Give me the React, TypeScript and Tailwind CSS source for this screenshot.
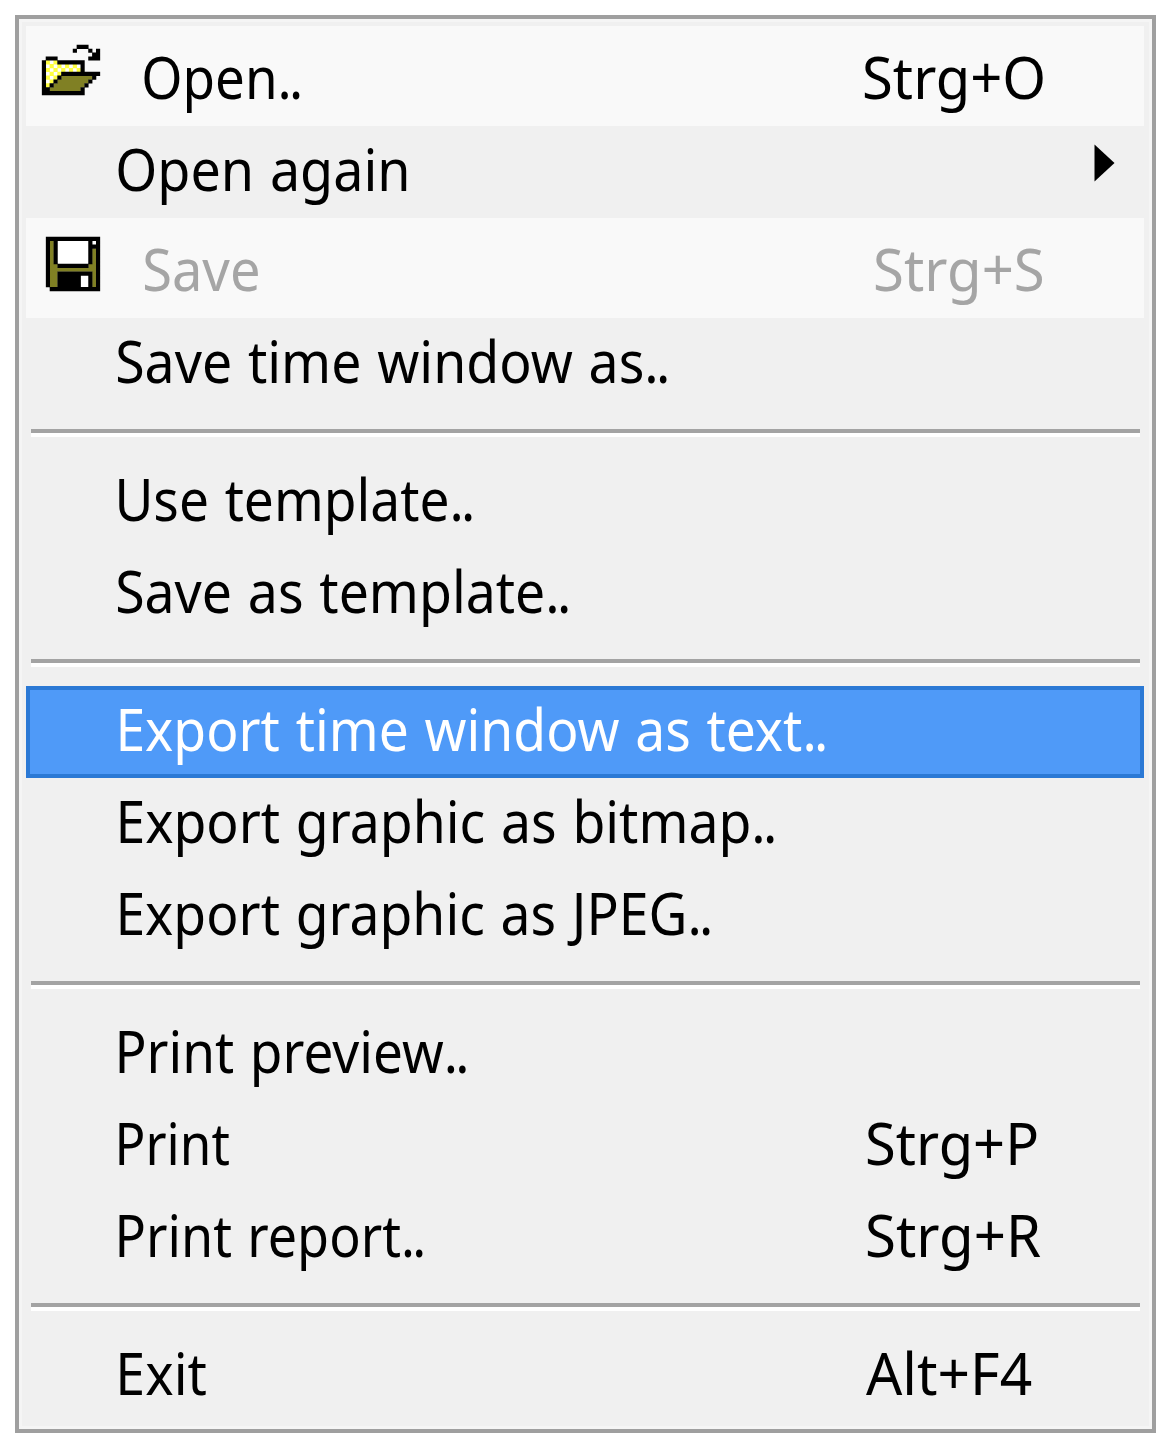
import { useLayoutEffect, useRef } from "react";

type Ink = { text: string; left: number; width: number };
type Row = {
  label: Ink;
  shortcut?: Ink;
  icon?: "open" | "save";
  disabled?: boolean;
  selected?: boolean;
  submenu?: boolean;
};

const groups: Row[][] = [
  [
    { label: { text: "Open..", left: 144, width: 156 }, shortcut: { text: "Strg+O", left: 864, width: 179 }, icon: "open" },
    { label: { text: "Open again", left: 118, width: 289 }, submenu: true },
    { label: { text: "Save", left: 144, width: 114 }, shortcut: { text: "Strg+S", left: 875, width: 168 }, icon: "save", disabled: true },
    { label: { text: "Save time window as..", left: 117, width: 550 } },
  ],
  [
    { label: { text: "Use template..", left: 119, width: 353 } },
    { label: { text: "Save as template..", left: 117, width: 451 } },
  ],
  [
    { label: { text: "Export time window as text..", left: 120, width: 705 }, selected: true },
    { label: { text: "Export graphic as bitmap..", left: 120, width: 654 } },
    { label: { text: "Export graphic as JPEG..", left: 120, width: 590 } },
  ],
  [
    { label: { text: "Print preview..", left: 119, width: 345 } },
    { label: { text: "Print", left: 119, width: 110 }, shortcut: { text: "Strg+P", left: 867, width: 170 } },
    { label: { text: "Print report..", left: 119, width: 304 }, shortcut: { text: "Strg+R", left: 867, width: 174 } },
  ],
  [{ label: { text: "Exit", left: 120, width: 86 }, shortcut: { text: "Alt+F4", left: 866, width: 166 } }],
];

// Condenses a label so that its visible ink spans exactly the given width.
// Trailing dots are set tighter than the words, and word gaps a little wider.
function FitText({ text, width }: { text: string; width: number }) {
  const ref = useRef<HTMLSpanElement>(null);
  const dotted = text.endsWith("..");
  const body = dotted ? text.slice(0, -2) : text;
  useLayoutEffect(() => {
    const el = ref.current;
    const ctx = document.createElement("canvas").getContext("2d");
    if (!el || !ctx) return;
    ctx.font = '400 58px "Noto Sans"';
    const m = ctx.measureText(text);
    const gaps = text.split(" ").length - 1;
    const ink = m.actualBoundingBoxLeft + m.actualBoundingBoxRight + gaps * 2 - (dotted ? 3 : 0);
    const scale = width / ink;
    el.style.transform = `translateX(${m.actualBoundingBoxLeft * scale}px) scaleX(${scale})`;
  }, [text, width, dotted]);
  return (
    <span ref={ref} className="inline-block origin-left whitespace-pre [word-spacing:2px]">
      {body}
      {dotted && <span className="tracking-[-3px]">..</span>}
    </span>
  );
}

const folder = [
  ".........###...",
  "........#...#.#",
  ".............##",
  ".###........###",
  "#ywy#######....",
  "#wywywywyw#....",
  "#ywywywywy#....",
  "#wywy##########",
  "#ywy#oooooooo#.",
  "#wy#oooooooo#..",
  "#y#oooooooo#...",
  "##oooooooo#....",
  "###########....",
];

const floppy = [
  "##############",
  "#o#wwwwwwww#w#",
  "#o#wwwwwwww###",
  "#o#wwwwwwww#o#",
  "#o#wwwwwwww#o#",
  "#o#wwwwwwww#o#",
  "#o#wwwwwwww#o#",
  "#oo########oo#",
  "#oooooooooooo#",
  "#oo#########o#",
  "#oo######ww#o#",
  "#oo######ww#o#",
  "#oo######ww#o#",
  ".#############",
];

const inks: Record<string, string> = { w: "#ffffff", y: "#ffff40", o: "#808024", "#": "#000000" };

// One path per colour, so that neighbouring cells join without seams.
function PixelIcon({ rows, className }: { rows: string[]; className: string }) {
  const cells = (ink: string) =>
    rows.flatMap((r, y) => [...r].map((c, x) => (c === ink ? `M${x - 0.04} ${y - 0.04}h1.08v1.08h-1.08z` : ""))).join("");
  return (
    <svg className={className} viewBox={`0 0 ${rows[0].length} ${rows.length}`} preserveAspectRatio="none">
      {Object.keys(inks).map((ink) => (
        <path key={ink} d={cells(ink)} fill={inks[ink]} />
      ))}
    </svg>
  );
}

function MenuRow({ row }: { row: Row }) {
  const tone = row.selected
    ? "h-[92px] bg-[#4f9af8] text-white shadow-[inset_0_0_0_4px_#2b79d5]"
    : row.icon
      ? "h-[100px] bg-[#f9f9f9] pt-2"
      : "h-[92px]";
  return (
    <div className={`flex w-[1118px] items-start ${tone} ${row.disabled ? "text-[#a5a5a5]" : ""}`}>
      <div className="h-full shrink-0" style={{ width: row.label.left - 26 }}>
        {row.icon === "open" && <PixelIcon rows={folder} className="mt-[11px] ml-[15.5px] h-[50px] w-[58px] overflow-visible" />}
        {row.icon === "save" && <PixelIcon rows={floppy} className="mt-[11px] ml-5 h-[54px] w-[54px] overflow-visible" />}
      </div>
      <div className="h-[92px] shrink-0 leading-[86px]" style={{ width: (row.shortcut?.left ?? 1000) - row.label.left }}>
        <FitText {...row.label} />
      </div>
      {row.shortcut && (
        <div className="h-[92px] w-0 leading-[86px]">
          <FitText {...row.shortcut} />
        </div>
      )}
      {row.submenu && (
        <svg className="mt-[18px] ml-[94px] h-[38px] w-[22px]" viewBox="0 0 22 38">
          <path d="M0.5 0.5 L20.5 19 L0.5 37.5 Z" fill="#000" />
        </svg>
      )}
    </div>
  );
}

export default function App() {
  return (
    <div className="h-[1446px] w-[1170px] bg-white pt-[15px] pl-[15px]">
      <div className="h-[1418px] w-[1141px] border-4 border-[#9f9f9f] bg-[#f0f0f0] pt-[7px] pl-[7px] font-['Noto_Sans',sans-serif] text-[58px] text-black shadow-[inset_0_0_0_3px_#f5f5f5]">
        {groups.map((rows, i) => (
          <div key={i}>
            {i > 0 && (
              <div className="h-[46px] pt-[19px] pl-[5px]">
                <div className="h-1 w-[1109px] bg-[#a3a3a3]" />
                <div className="h-1 w-[1109px] bg-white" />
              </div>
            )}
            {rows.map((row) => (
              <MenuRow key={row.label.text} row={row} />
            ))}
          </div>
        ))}
      </div>
    </div>
  );
}
